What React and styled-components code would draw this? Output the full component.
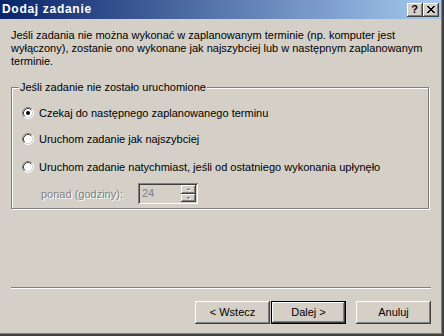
import React from "react";
import styled, { createGlobalStyle } from "styled-components";

const Global = createGlobalStyle`
  html, body { margin: 0; padding: 0; background: #D4D0C8; }
  body { font-family: "Liberation Sans", Arial, sans-serif; font-size: 11px; color: #000; }
  * { box-sizing: border-box; }
`;

const Window = styled.div`
  width: 444px;
  height: 336px;
  background: #D4D0C8;
  display: flex;
  flex-direction: column;
  padding: 0 3px 3px 0;
  box-shadow: inset -2px -2px 0 #404040, inset -3px -3px 0 #808080;
`;

const TitleBar = styled.div`
  height: 19px;
  flex: none;
  display: flex;
  align-items: center;
  padding: 0 2px 0 2px;
  background: linear-gradient(to right, #0A246A, #A6CAF0);
`;

const Title = styled.div`
  flex: 1;
  color: #fff;
  font-weight: bold;
  font-size: 12px;
  letter-spacing: 0.7px;
  line-height: 19px;
`;

const CaptionButton = styled.div`
  width: 16px;
  height: 14px;
  background: #D4D0C8;
  box-shadow: inset -1px -1px 0 #404040, inset 1px 1px 0 #fff, inset -2px -2px 0 #808080;
  display: flex;
  align-items: center;
  justify-content: center;
  font-weight: bold;
  font-size: 11px;
  line-height: 14px;
  color: #000;
  padding: 0 1px 1px 0;
`;

const Body = styled.div`
  flex: 1;
  padding: 10px 12px 0 11px;
`;

const Intro = styled.div`
  line-height: 13px;
`;

const Group = styled.div`
  position: relative;
  margin-top: 19px;
  border: 1px solid #808080;
  box-shadow: inset 1px 1px 0 #fff, 1px 1px 0 #fff;
  padding: 18px 10px 4px 10px;
`;

const Legend = styled.div`
  position: absolute;
  left: 7px;
  top: -7px;
  padding: 0 1px 0 1px;
  background: #D4D0C8;
  line-height: 13px;
`;

const RadioRow = styled.div`
  display: flex;
  align-items: center;
  gap: 5px;
  height: 14px;
  line-height: 14px;
  margin-top: ${(p) => p.$mt || 0}px;
`;

const SpinRow = styled.div`
  display: flex;
  align-items: center;
  margin: 9px 0 0 19px;
`;

const DisabledLabel = styled.div`
  width: 97px;
  color: #808080;
  text-shadow: 1px 1px 0 #fff;
  padding-top: 1px;
`;

const SpinBox = styled.div`
  width: 60px;
  height: 21px;
  display: flex;
  background: #D4D0C8;
  padding: 2px;
  box-shadow: inset 1px 1px 0 #808080, inset -1px -1px 0 #fff, inset 2px 2px 0 #404040, inset -2px -2px 0 #D4D0C8;
`;

const SpinValue = styled.div`
  flex: 1;
  color: #808080;
  padding: 1px 0 0 2px;
  line-height: 14px;
`;

const SpinButtons = styled.div`
  width: 15px;
  display: flex;
  flex-direction: column;
`;

const SpinBtn = styled.div`
  flex: 1;
  display: flex;
  align-items: center;
  justify-content: center;
  background: #D4D0C8;
  box-shadow: inset -1px -1px 0 #404040, inset 1px 1px 0 #fff, inset -2px -2px 0 #808080;
`;

const Footer = styled.div`
  flex: none;
  padding: 0 10px 9px 11px;
`;

const Separator = styled.div`
  height: 2px;
  border-top: 1px solid #808080;
  border-bottom: 1px solid #fff;
  margin-bottom: 12px;
`;

const Buttons = styled.div`
  display: flex;
  justify-content: flex-end;
`;

const Button = styled.div`
  width: 75px;
  height: 23px;
  display: flex;
  align-items: center;
  justify-content: center;
  margin-left: ${(p) => p.$ml || 0}px;
  background: #D4D0C8;
  border: ${(p) => (p.$default ? "1px solid #000" : "none")};
  box-shadow: inset -1px -1px 0 #404040, inset 1px 1px 0 #fff, inset -2px -2px 0 #808080;
  padding-bottom: 1px;
`;

const Radio = ({ checked }) => (
  <svg width="12" height="12" viewBox="0 0 12 12" style={{ flex: "none" }}>
    <circle cx="6" cy="6" r="5" fill="#fff" />
    <path d="M2.11 9.89 A5.5 5.5 0 0 1 9.89 2.11" fill="none" stroke="#808080" strokeWidth="1" />
    <path d="M9.89 2.11 A5.5 5.5 0 0 1 2.11 9.89" fill="none" stroke="#fff" strokeWidth="1" />
    <path d="M2.82 9.18 A4.5 4.5 0 0 1 9.18 2.82" fill="none" stroke="#404040" strokeWidth="1" />
    <path d="M9.18 2.82 A4.5 4.5 0 0 1 2.82 9.18" fill="none" stroke="#D4D0C8" strokeWidth="1" />
    {checked && <circle cx="6" cy="6" r="2" fill="#000" />}
  </svg>
);

const CloseGlyph = () => {
  const rows = ["xx....xx", ".xx..xx.", "..xxxx..", "...xx...", "..xxxx..", ".xx..xx.", "xx....xx"];
  return (
    <svg width="8" height="7" viewBox="0 0 8 7" shapeRendering="crispEdges">
      {rows.flatMap((r, y) =>
        r.split("").map((c, x) => (c === "x" ? <rect key={`${x}-${y}`} x={x} y={y} width="1" height="1" fill="#000" /> : null))
      )}
    </svg>
  );
};

const Arrow = ({ up }) => (
  <svg width="7" height="4" viewBox="0 0 7 4" shapeRendering="crispEdges">
    {up ? (
      <>
        <path d="M2 2h3v1h-3zM3 1h1v1h-1z" fill="#fff" transform="translate(1,1)" />
        <path d="M2 2h3v1h-3zM3 1h1v1h-1z" fill="#808080" />
      </>
    ) : (
      <>
        <path d="M2 1h3v1h-3zM3 2h1v1h-1z" fill="#fff" transform="translate(1,1)" />
        <path d="M2 1h3v1h-3zM3 2h1v1h-1z" fill="#808080" />
      </>
    )}
  </svg>
);

export default function App() {
  return (
    <>
      <Global />
      <Window>
        <TitleBar>
          <Title>Dodaj zadanie</Title>
          <CaptionButton>?</CaptionButton>
          <CaptionButton>
            <CloseGlyph />
          </CaptionButton>
        </TitleBar>
        <Body>
          <Intro>
            Jeśli zadania nie można wykonać w zaplanowanym terminie (np. komputer jest
            <br />
            wyłączony), zostanie ono wykonane jak najszybciej lub w następnym zaplanowanym
            <br />
            terminie.
          </Intro>
          <Group>
            <Legend>Jeśli zadanie nie zostało uruchomione</Legend>
            <RadioRow>
              <Radio checked />
              <span>Czekaj do następnego zaplanowanego terminu</span>
            </RadioRow>
            <RadioRow $mt={12}>
              <Radio />
              <span>Uruchom zadanie jak najszybciej</span>
            </RadioRow>
            <RadioRow $mt={14}>
              <Radio />
              <span>Uruchom zadanie natychmiast, jeśli od ostatniego wykonania upłynęło</span>
            </RadioRow>
            <SpinRow>
              <DisabledLabel>ponad (godziny):</DisabledLabel>
              <SpinBox>
                <SpinValue>24</SpinValue>
                <SpinButtons>
                  <SpinBtn>
                    <Arrow up />
                  </SpinBtn>
                  <SpinBtn>
                    <Arrow />
                  </SpinBtn>
                </SpinButtons>
              </SpinBox>
            </SpinRow>
          </Group>
        </Body>
        <Footer>
          <Separator />
          <Buttons>
            <Button>&lt; Wstecz</Button>
            <Button $default $ml={1}>Dalej &gt;</Button>
            <Button $ml={10}>Anuluj</Button>
          </Buttons>
        </Footer>
      </Window>
    </>
  );
}
